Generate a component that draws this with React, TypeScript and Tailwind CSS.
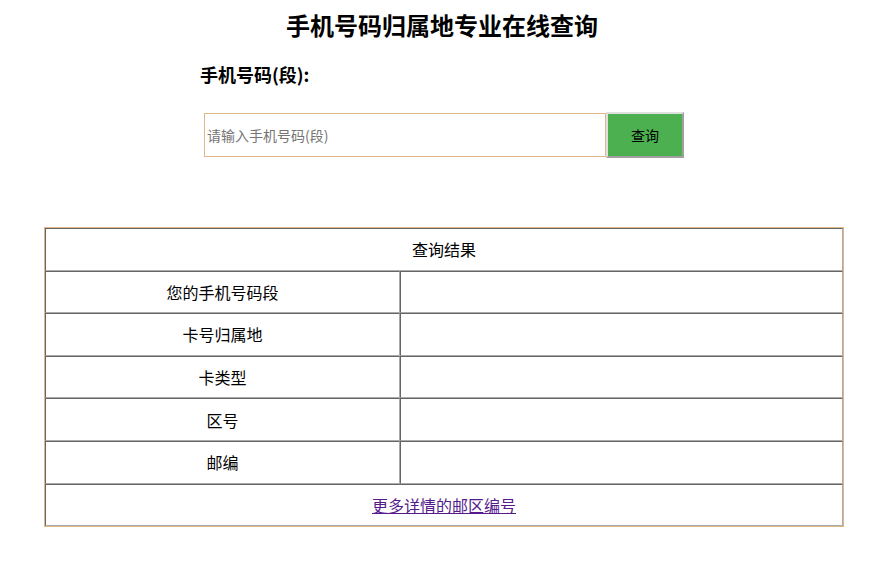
import React, { useState } from "react";

const rows = ["您的手机号码段", "卡号归属地", "卡类型", "区号", "邮编"];

const cell =
  "border-t border-l border-b border-r border-t-[#666] border-l-[#666] border-b-[#aaa] border-r-[#aaa] h-[42.6px] p-0 text-center text-[16px] text-black";

export default function App() {
  const [phone, setPhone] = useState("");

  return (
    <div
      className="w-[884px] h-[563px] bg-white"
      style={{ fontFamily: '"Noto Sans CJK SC", "Liberation Sans", sans-serif' }}
    >
      <h1 className="pt-[8px] text-center text-[24px] font-bold leading-[34px] text-black">
        手机号码归属地专业在线查询
      </h1>

      <div className="ml-[200px] w-[484px]">
        <div className="mt-[20px] text-[18px] font-bold leading-[24px] text-black">
          手机号码(段):
        </div>
        <div className="mt-[26px] ml-[4px] flex h-[46px] items-center">
          <input
            value={phone}
            onChange={(e) => setPhone(e.target.value)}
            placeholder="请输入手机号码(段)"
            className="h-[44px] w-[402px] border border-[#deb887] px-[2px] text-[14px] text-black outline-none placeholder:text-[#757575]"
          />
          <button className="h-[46px] w-[78px] border-2 border-t-[#e0e0e0] border-l-[#e0e0e0] border-b-[#a0a0a0] border-r-[#a0a0a0] bg-[#4caf50] text-[14px] text-black">
            查询
          </button>
        </div>
      </div>

      <table className="mt-[69px] ml-[44px] w-[800px] border-separate border-spacing-0 border border-[#deb887]">
        <tbody>
          <tr>
            <td colSpan={2} className={cell}>
              查询结果
            </td>
          </tr>
          {rows.map((r) => (
            <tr key={r}>
              <td className={cell + " w-[355px]"}>{r}</td>
              <td className={cell}></td>
            </tr>
          ))}
          <tr>
            <td colSpan={2} className={cell}>
              <a href="#" className="text-[#551a8b] underline">
                更多详情的邮区编号
              </a>
            </td>
          </tr>
        </tbody>
      </table>
    </div>
  );
}
